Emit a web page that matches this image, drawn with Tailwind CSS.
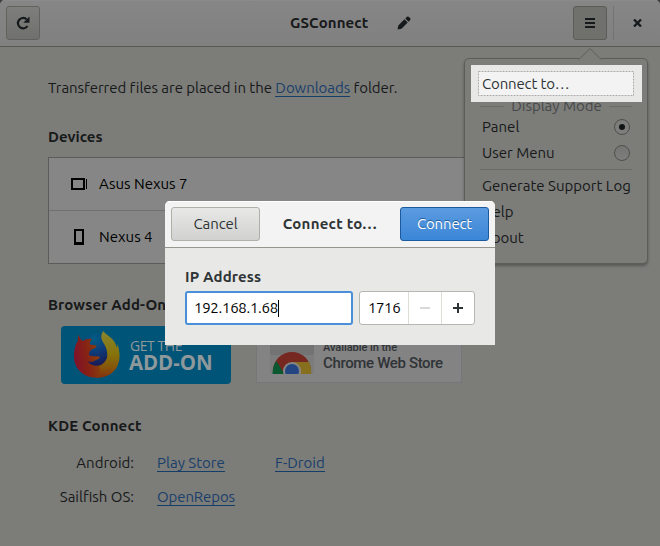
<!DOCTYPE html>
<html lang="en">
<head>
<meta charset="utf-8">
<title>GSConnect</title>
<script src="https://cdn.jsdelivr.net/npm/@tailwindcss/browser@4"></script>
</head>
<body class="w-[660px] h-[546px] overflow-hidden bg-[#3c3c3c]">
<div class="relative w-[660px] h-[546px] overflow-hidden rounded-t-[5px] bg-[#7c7c79] font-['Ubuntu','Noto_Sans',sans-serif] text-[15px] leading-5 text-[#17191a] whitespace-nowrap">

  <header class="flex h-[47px] items-start border-b border-[#585854] bg-linear-to-b from-[#868686] to-[#808080] pt-[6px] pl-[6px] shadow-[inset_0_1px_#8b8b8b]">
    <button class="flex size-[34px] items-center justify-center rounded-[3px] border border-[#61615d] bg-linear-to-b from-[#7e7e7c] to-[#70706d]">
      <svg width="16" height="16" viewBox="0 0 16 16" fill="none"><path d="M12.500 11A5.200 5.200 0 1 1 11.500 4.200" stroke="#15191b" stroke-width="2.200"/><path d="M14.500 1.500v6.300H8.300z" fill="#15191b"/></svg>
    </button>
    <h1 class="ml-[250px] mt-[7px] w-[79px] font-bold tracking-[0.1px]">GSConnect</h1>
    <svg class="ml-[28px] mt-[10px]" width="14" height="14" viewBox="0 0 14 14" fill="#15191b"><path d="M.5 13.5l.8-4L7.5 3.3l3.2 3.2-6.200 6.200zM8.300 2.500l1.700-1.700q1-.8 2 .2l1 1q1 1 .2 2l-1.700 1.700z"/></svg>
    <button class="ml-[162px] flex size-[34px] items-center justify-center rounded-[3px] border border-[#5c5c58] bg-[#70706d]">
      <svg width="10" height="10" viewBox="0 0 10 10" fill="#15191b"><path d="M0 0h10v2H0zM0 4h10v2H0zM0 8h10v2H0z"/></svg>
    </button>
    <div class="ml-[6px] h-[34px] w-px bg-[#737371]"></div>
    <svg class="ml-[19px] mt-[13px]" width="9" height="8" viewBox="0 0 9 8"><path d="M1 .5l7 7M8 .5l-7 7" stroke="#15191b" stroke-width="2.300"/></svg>
  </header>

  <main class="px-[48px] pt-[31px]">
    <p class="tracking-[-0.045px]">Transferred files are placed in the <a class="border-b border-[#153d6a] text-[#193f6b]">Downloads</a> folder.</p>
    <h2 class="mt-[29px] font-bold">Devices</h2>
    <ul class="mt-[10px] h-[107px] w-[564px] border border-[#5c5c59] bg-[#868686] text-black">
      <li class="flex h-[53px] items-center border-b border-[#70706e] pl-[22px]">
        <svg width="17" height="12" viewBox="0 0 17 12" fill="none"><path d="M1 1h12v10H1z" stroke="#000" stroke-width="2"/><path d="M15.500 1v10" stroke="#000"/></svg>
        <span class="ml-[11px]">Asus Nexus 7</span>
      </li>
      <li class="flex h-[52px] items-center pl-[25px]">
        <svg width="10" height="16" viewBox="0 0 10 16"><path fill-rule="evenodd" d="M0 0h10v16H0zM2 2v11h6V2z"/></svg>
        <span class="ml-[15px]">Nexus 4</span>
      </li>
    </ul>
    <h2 class="mt-[31px] font-bold tracking-[0.15px]">Browser Add-Ons</h2>
    <div class="mt-[11px] flex pl-[13px]">
      <a class="flex h-[58px] w-[170px] rounded-[4px] bg-[#005477] pl-[13px] pt-[5px] font-['Open_Sans',sans-serif] text-[#8f989b]">
        <svg width="46" height="48" viewBox="0 0 46 48">
          <defs>
            <linearGradient id="fx" x1="0" y1=".55" x2="1" y2=".4"><stop offset="0" stop-color="#80112c"/><stop offset=".3" stop-color="#862214"/><stop offset=".65" stop-color="#87450a"/><stop offset="1" stop-color="#866015"/></linearGradient>
            <radialGradient id="globe" cx=".45" cy=".15" r=".85"><stop offset="0" stop-color="#005f85"/><stop offset=".5" stop-color="#0f3a78"/><stop offset="1" stop-color="#181a55"/></radialGradient>
            <linearGradient id="tail" x1="0" y1="0" x2="0" y2="1"><stop offset="0" stop-color="#89852f"/><stop offset=".5" stop-color="#87730c"/><stop offset=".8" stop-color="#86520a"/><stop offset="1" stop-color="#84300e"/></linearGradient>
          </defs>
          <circle cx="22" cy="19" r="16" fill="url(#globe)"/>
          <path fill="url(#fx)" d="M4.500 3.500c.5 3 2 5 4.500 6.500 3-2 6-2.500 9-2-1.500 1.500-2.500 3.500-2 5.500 2.500.3 4.500.5 6.700 1.200 0 2-3 3-5.700 4-1.500 1.500-2 3.500-2 5.300 3 2 7 .5 11 2-1 2-2 2.500-4 3-3 2-6 2.500-9 1 5 6 14 7 19-1l8-12c7 16-2 29.700-17 29.700C8 46.700 0 36.500 0 25 0 19 1.500 13 4 9.500c-.4-2 0-4 .5-6z"/>
          <path fill="url(#tail)" d="M29.500 0C26 4 27 8 29.500 12c3 4.500 4.500 10 3.500 15-1 4-4 7-8 8.500C28 42 26 46 23 46.700 38 47 46 36 45.500 24 45.300 20 45 17 43 13v4c-1.500-5-3-7.500-6.500-10.500C33 3.500 30.500 2 29.500 0z"/>
        </svg>
        <span class="ml-[10px] flex flex-col">
          <span class="mt-[6px] text-[14px] leading-[18px] tracking-[-0.450px]">GET THE</span>
          <b class="ml-[-1px] text-[20.500px] leading-[14px] tracking-[-0.100px]">ADD-ON</b>
        </span>
      </a>
      <a class="ml-[26px] flex h-[56px] w-[204px] bg-[#838383] text-[#303337] font-['Roboto',sans-serif] shadow-[0_0_0_1px_#77777b]">
        <svg class="ml-[13px]" width="44" height="48" viewBox="0 0 44 48">
          <defs><clipPath id="tile"><rect y="0" width="44" height="48" rx="3"/></clipPath></defs>
          <g clip-path="url(#tile)">
            <path fill="#737373" d="M0 0h44v29H0z"/><path fill="#7c7c7c" d="M0 29h44v19H0z"/>
            <circle cx="22" cy="45" r="19" fill="#752720"/>
            <path fill="#0b572f" d="M6.500 35L15 49H2.500C2.500 43 3.500 39 6.500 35z"/>
            <path fill="#86701f" d="M22 36h17c2 4 2.500 8 2 13H30z"/>
            <circle cx="22" cy="45" r="9" fill="#868686"/><circle cx="22" cy="45" r="7" fill="#234581"/>
          </g>
        </svg>
        <span class="ml-[9px] flex flex-col">
          <span class="mt-[13px] text-[11px] leading-[17px] tracking-[-0.050px] font-medium">Available in the</span>
          <span class="text-[15px] leading-[15px] tracking-[-0.350px] font-medium">Chrome Web Store</span>
        </span>
      </a>
    </div>
    <h2 class="mt-[32px] font-bold tracking-[0.15px]">KDE Connect</h2>
    <div class="mt-[17px] grid grid-cols-[86px_95px_1fr] gap-x-[23px] gap-y-[14px]">
      <span class="text-right">Android:</span><span><a class="border-b border-[#153d6a] text-[#193f6b]">Play Store</a></span><span><a class="border-b border-[#153d6a] text-[#193f6b]">F-Droid</a></span>
      <span class="text-right">Sailfish OS:</span><span><a class="border-b border-[#153d6a] text-[#193f6b] tracking-[-0.100px]">OpenRepos</a></span>
    </div>
  </main>

  <div class="absolute left-[464px] top-[58px] h-[206px] w-[184px] rounded-[5px] border border-[#5c5c59] bg-[#7c7c79] shadow-[0_2px_3px_#0000004d]">
    <svg class="absolute left-[113px] top-[-12px]" width="24" height="13" viewBox="0 0 24 13"><path d="M0 13v-1l12-11 12 11v1z" fill="#7c7c79"/><path d="M0 12L2 11.500 12 1.500 22 11.500 24 12" fill="none" stroke="#5c5c59"/></svg>
    <div class="relative z-10 ml-[6px] mt-[6px] h-[37px] w-[171px] bg-[#e8e8e6] pt-[6px] pl-[7px]">
      <div class="relative flex h-[25px] w-[156px] items-center rounded-[1px] bg-[#f3f3f3] pl-[4px] text-[#2e3436] tracking-[-0.150px]">
        <svg class="absolute inset-0" width="156" height="25"><rect x=".5" y=".5" width="155" height="24" fill="none" stroke="#aaa" stroke-dasharray="2 1"/></svg>Connect to…
      </div>
    </div>
    <div class="mt-[-6px] ml-[15px] flex w-[152px] items-center justify-between text-[#47494a]">
      <i class="h-px w-[24px] bg-[#6b6b68]"></i><span>Display Mode</span><i class="h-px w-[23px] bg-[#6b6b68]"></i>
    </div>
    <div class="ml-[17px] mr-[17px] mt-px flex items-center justify-between">
      <span>Panel</span><span class="flex size-4 items-center justify-center rounded-full border border-[#4f4f4c] bg-[#7d7d7b]"><i class="size-[6px] rounded-full bg-[#111516]"></i></span>
    </div>
    <div class="ml-[17px] mr-[17px] mt-[6px] flex items-center justify-between">
      <span>User Menu</span><span class="size-4 rounded-full border border-[#4f4f4c] bg-linear-to-b from-[#747472] to-[#7e7e7c]"></span>
    </div>
    <div class="ml-[15px] mt-[6px] h-px w-[152px] bg-[#6b6b68]"></div>
    <div class="ml-[17px] mt-[6px]">Generate Support Log</div>
    <div class="ml-[17px] mt-[6px]">Help</div>
    <div class="ml-[17px] mt-[6px]">About</div>
  </div>

  <section class="absolute left-[165px] top-[201px] h-[144px] w-[330px] overflow-hidden rounded-t-[5px] bg-[#e8e8e6] text-[#2e3436]">
    <div class="flex h-[47px] items-start justify-between border-b border-[#96968f] bg-[#f3f3f3] px-[6px] pt-[6px] shadow-[inset_0_1px_#fff]">
      <button class="h-[34px] w-[89px] rounded-[3px] border border-[#b0b0ab] bg-linear-to-b from-[#e8e8e6] to-[#d1d1cf] tracking-[-0.100px]">Cancel</button>
      <h2 class="mt-[7px] font-bold tracking-[0.250px]">Connect to…</h2>
      <button class="h-[34px] w-[89px] rounded-[3px] border border-[#1c5a9d] bg-linear-to-b from-[#5b9be0] to-[#3b86d7] text-white tracking-[-0.150px] [text-shadow:0_-1px_#215d9c]">Connect</button>
    </div>
    <div class="px-[20px] pt-[19px]">
      <h3 class="font-bold tracking-[0.150px]">IP Address</h3>
      <div class="mt-[4px] flex gap-[6px] text-black">
        <div class="flex h-[34px] w-[168px] items-center rounded-[3px] border-2 border-[#4a90d9] bg-white pl-[7px]"><span class="tracking-[-0.280px]">192.168.1.68</span><i class="h-[17px] w-px bg-black"></i></div>
        <div class="flex h-[34px] w-[116px] items-center rounded-[3px] border border-[#b6b6b2] bg-white">
          <span class="w-[48px] pl-[8px] tracking-[-0.400px]">1716</span>
          <span class="flex h-full w-[33px] items-center justify-center border-l border-[#deded9]"><i class="h-[2px] w-[10px] bg-[#d9d9d9]"></i></span>
          <span class="flex h-full w-[33px] items-center justify-center border-l border-[#deded9]"><svg width="10" height="10" viewBox="0 0 10 10"><path fill="#2e3436" d="M4 0h2v4h4v2H6v4H4V6H0V4h4z"/></svg></span>
        </div>
      </div>
    </div>
  </section>
</div>
</body>
</html>
